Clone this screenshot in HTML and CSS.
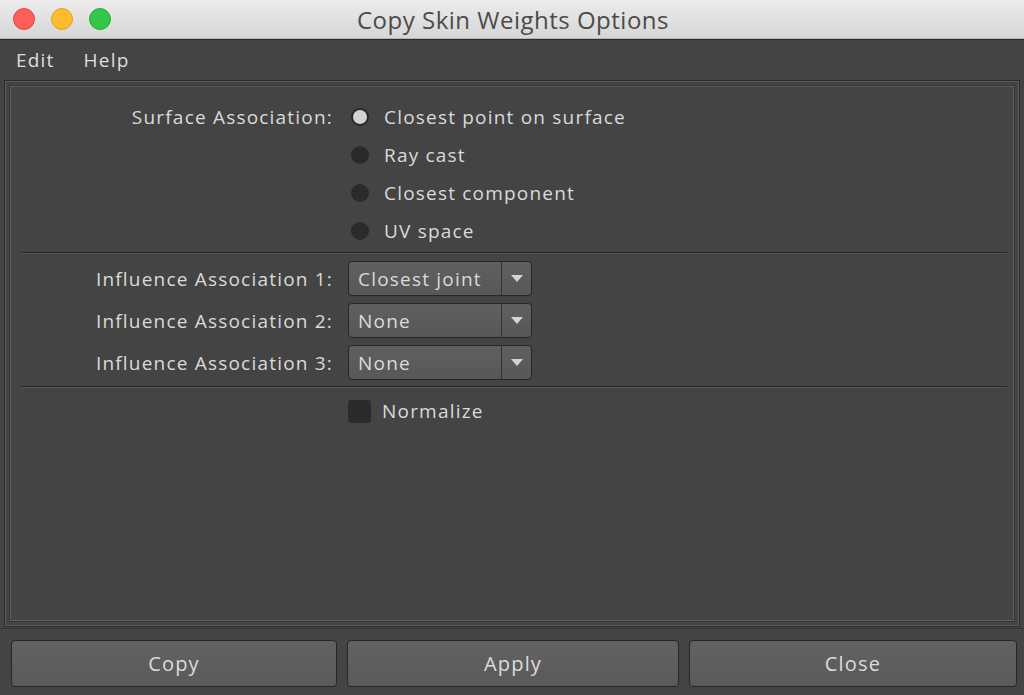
FILE: index.html
```html
<!DOCTYPE html>
<html>
<head>
<meta charset="utf-8">
<link rel="stylesheet" href="styles.css">
</head>
<body>
<div class="window">
  <div class="titlebar">
    <div class="lights">
      <span class="light red"></span>
      <span class="light yellow"></span>
      <span class="light green"></span>
    </div>
    <div class="title">Copy Skin Weights Options</div>
  </div>
  <div class="menubar">
    <span class="menu">Edit</span>
    <span class="menu">Help</span>
  </div>
  <div class="frame">
    <div class="panel">
      <div class="group">
        <div class="label">Surface Association:</div>
        <div class="radios">
          <div class="radio-row"><span class="radio on"></span><span>Closest point on surface</span></div>
          <div class="radio-row"><span class="radio"></span><span>Ray cast</span></div>
          <div class="radio-row"><span class="radio"></span><span>Closest component</span></div>
          <div class="radio-row"><span class="radio"></span><span>UV space</span></div>
        </div>
      </div>
      <div class="sep"></div>
      <div class="dropdowns">
        <div class="dd-row">
          <div class="label">Influence Association 1:</div>
          <div class="dropdown"><span class="dd-text">Closest joint</span><span class="dd-arrow"><svg width="12" height="7" viewBox="0 0 12 7"><path d="M0 0H12L6 7Z" fill="#d4d4d4"/></svg></span></div>
        </div>
        <div class="dd-row">
          <div class="label">Influence Association 2:</div>
          <div class="dropdown"><span class="dd-text">None</span><span class="dd-arrow"><svg width="12" height="7" viewBox="0 0 12 7"><path d="M0 0H12L6 7Z" fill="#d4d4d4"/></svg></span></div>
        </div>
        <div class="dd-row">
          <div class="label">Influence Association 3:</div>
          <div class="dropdown"><span class="dd-text">None</span><span class="dd-arrow"><svg width="12" height="7" viewBox="0 0 12 7"><path d="M0 0H12L6 7Z" fill="#d4d4d4"/></svg></span></div>
        </div>
      </div>
      <div class="sep sep2"></div>
      <div class="check-row">
        <div class="label"></div>
        <div class="check-wrap"><span class="checkbox"></span><span>Normalize</span></div>
      </div>
    </div>
  </div>
  <div class="buttons">
    <div class="btn btn-copy">Copy</div>
    <div class="btn btn-apply">Apply</div>
    <div class="btn btn-close">Close</div>
  </div>
</div>
</body>
</html>
```

FILE: styles.css
```css
html, body {
  margin: 0;
  padding: 0;
  background: #444444;
}
body {
  width: 1024px;
  height: 695px;
  overflow: hidden;
  font-family: "Open Sans", "Liberation Sans", sans-serif;
  color: #dadada;
}
.window {
  display: flex;
  flex-direction: column;
  height: 695px;
}
.titlebar {
  height: 38px;
  position: relative;
  background: linear-gradient(#ececec, #d6d6d6);
  border-bottom: 1px solid #b4b4b4;
  box-shadow: 0 1px 0 #2c2c2c;
  display: flex;
  align-items: center;
  justify-content: center;
  flex-shrink: 0;
}
.lights {
  position: absolute;
  left: 13px;
  top: 8px;
  display: flex;
  gap: 16px;
}
.light {
  width: 22px;
  height: 22px;
  border-radius: 50%;
  box-sizing: border-box;
}
.red { background: #fc5f57; border: 1px solid #e0443e; }
.yellow { background: #fdbc2e; border: 1px solid #dea123; }
.green { background: #33c748; border: 1px solid #27aa35; }
.title {
  font-size: 24px;
  color: #4b4b4b;
  letter-spacing: 0.5px;
  margin-left: 2px;
}
.menubar {
  height: 40px;
  display: flex;
  align-items: center;
  padding-left: 16px;
  gap: 29px;
  font-size: 19px;
  letter-spacing: 1.2px;
  color: #dedede;
  flex-shrink: 0;
  margin-top: 1px;
}
.frame {
  margin: 0 4px;
  height: 535px;
  border: 1px solid #2c2c2c;
  box-shadow: inset 1px 1px 0 #5a5a5a, inset -1px -1px 0 #5a5a5a;
  padding: 5px;
  flex-shrink: 0;
}
.panel {
  height: 100%;
  box-sizing: border-box;
  border: 1px solid #5c5c5c;
  box-shadow: 0 0 0 1px #363636;
  padding-top: 11px;
  font-size: 19px;
  letter-spacing: 1.2px;
}
.label {
  width: 322px;
  text-align: right;
  flex-shrink: 0;
}
.group {
  display: flex;
}
.group .label {
  line-height: 38px;
}
.radios {
  margin-left: 18px;
  display: flex;
  flex-direction: column;
}
.radio-row {
  height: 38px;
  display: flex;
  align-items: center;
  gap: 15px;
}
.radio {
  width: 18px;
  height: 18px;
  border-radius: 50%;
  background: #2a2a2a;
  box-sizing: border-box;
}
.radio.on {
  background: #d4d4d4;
  border: 2px solid #2a2a2a;
}
.sep {
  height: 1px;
  background: #282828;
  border-bottom: 1px solid #555555;
  margin: 2px 6px 0 10px;
}
.dropdowns {
  display: flex;
  flex-direction: column;
  gap: 7px;
  margin-top: 7px;
}
.dd-row {
  display: flex;
  align-items: center;
}
.dd-row .label {
  padding-right: 15px;
}
.dropdown {
  width: 184px;
  height: 35px;
  box-sizing: border-box;
  border: 1px solid #272727;
  border-radius: 4px;
  background: linear-gradient(#606060, #575757);
  display: flex;
  align-items: stretch;
}
.dd-text {
  flex: 1;
  padding-left: 9px;
  display: flex;
  align-items: center;
}
.dd-arrow {
  width: 29px;
  border-left: 1px solid #333333;
  display: flex;
  align-items: center;
  justify-content: center;
}
.sep2 {
  margin-top: 6px;
}
.check-row {
  display: flex;
  align-items: center;
  margin-top: 10px;
}
.check-row .label {
  padding-right: 15px;
}
.check-wrap {
  display: flex;
  align-items: center;
  gap: 11px;
}
.checkbox {
  width: 23px;
  height: 23px;
  border-radius: 3px;
  background: #2b2b2b;
}
.buttons {
  display: flex;
  gap: 10px;
  padding: 11px 7px 0 11px;
  border-top: 1px solid #343434;
  margin-top: 1px;
}
.btn {
  height: 47px;
  box-sizing: border-box;
  border: 1px solid #262626;
  border-radius: 4px;
  background: linear-gradient(#626262, #5a5a5a);
  display: flex;
  align-items: center;
  justify-content: center;
  font-size: 20px;
  letter-spacing: 1.2px;
  color: #dcdcdc;
}
.btn-copy { width: 326px; }
.btn-apply { width: 332px; }
.btn-close { width: 328px; }
```
